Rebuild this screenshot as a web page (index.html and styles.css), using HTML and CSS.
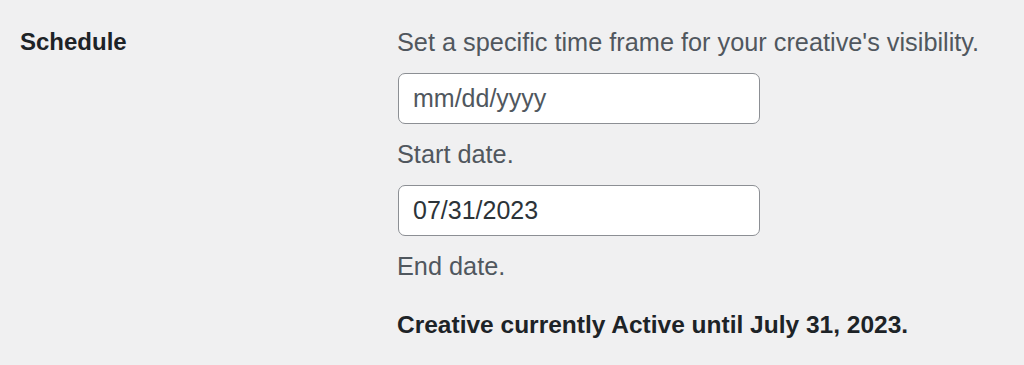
FILE: index.html
```html
<!DOCTYPE html>
<html lang="en">

<head>
    <meta charset="UTF-8">
    <meta name="viewport" content="width=device-width, initial-scale=1.0">
    <title>Schedule</title>
    <link rel="stylesheet" href="styles.css">
</head>

<body>
    <div class="fila-formulario">
        <div class="etiqueta">Schedule</div>
        <div class="campos">
            <p class="descripcion">Set a specific time frame for your creative's visibility.</p>
            <input class="fecha" type="text" placeholder="mm/dd/yyyy">
            <p class="descripcion">Start date.</p>
            <input class="fecha" type="text" value="07/31/2023">
            <p class="descripcion">End date.</p>
            <p class="estado">Creative currently Active until July 31, 2023.</p>
        </div>
    </div>
</body>

</html>
```

FILE: styles.css
```css
body {
    margin: 0;
    background-color: #f0f0f1;
    font-family: "Liberation Sans", Arial, sans-serif;
    color: #1d2327;
}

.fila-formulario {
    display: flex;
    padding: 27px 0 0 20px;
}

.etiqueta {
    width: 377px;
    font-size: 24px;
    line-height: 30px;
    font-weight: bold;
    color: #1d2327;
}

.campos {
    display: flex;
    flex-direction: column;
    align-items: flex-start;
}

.descripcion {
    margin: 0;
    font-size: 25.3px;
    line-height: 30px;
    color: #50575e;
}

.fecha {
    box-sizing: border-box;
    width: 362px;
    height: 51px;
    margin: 16px 0 15px 1px;
    padding: 0 14px;
    border: 1.6px solid #8c8f94;
    border-radius: 7px;
    background-color: white;
    font-family: inherit;
    font-size: 25px;
    color: #2c3338;
}

.fecha::placeholder {
    color: #50575e;
}

.estado {
    margin: 29px 0 0;
    font-size: 24.5px;
    line-height: 30px;
    font-weight: bold;
    color: #1d2327;
}
```
